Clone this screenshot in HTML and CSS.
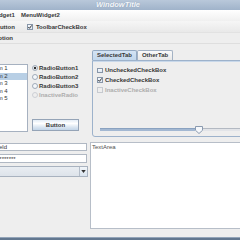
FILE: index.html
```html
<!DOCTYPE html>
<html>
<head>
<meta charset="utf-8">
<link rel="stylesheet" href="styles.css">
</head>
<body>
<div class="window">
  <div class="titlebar"><span class="title">WindowTitle</span></div>
  <div class="menubar"><span class="menu">MenuWidget1</span><span class="menu">MenuWidget2</span></div>
  <div class="toolbar">
    <span class="tbtn">ToolbarButton</span>
    <span class="check"><span class="box"><svg viewBox="0 0 6 6" width="6" height="6"><polyline points="1.3,3 2.5,4.3 4.7,1.4" fill="none" stroke="#333" stroke-width="1"/></svg></span>ToolbarCheckBox</span>
  </div>
  <div class="caption">Description</div>
  <div class="main">
    <div class="topleft">
      <ul class="list">
        <li>Item 1</li>
        <li class="sel">Item 2</li>
        <li>Item 3</li>
        <li>Item 4</li>
        <li>Item 5</li>
      </ul>
      <div class="radios">
        <div class="radio"><svg class="rdot" viewBox="0 0 6 6" width="6" height="6"><circle cx="3" cy="3" r="2.5" fill="#f4f7fb" stroke="#8b98aa" stroke-width="0.8"/><circle cx="3" cy="3" r="1.2" fill="#2a2a2a"/></svg>RadioButton1</div>
        <div class="radio"><svg class="rdot" viewBox="0 0 6 6" width="6" height="6"><circle cx="3" cy="3" r="2.5" fill="#f4f7fb" stroke="#8b98aa" stroke-width="0.8"/></svg>RadioButton2</div>
        <div class="radio"><svg class="rdot" viewBox="0 0 6 6" width="6" height="6"><circle cx="3" cy="3" r="2.5" fill="#f4f7fb" stroke="#8b98aa" stroke-width="0.8"/></svg>RadioButton3</div>
        <div class="radio off"><svg class="rdot" viewBox="0 0 6 6" width="6" height="6"><circle cx="3" cy="3" r="2.5" fill="#eeeeee" stroke="#c4c8ce" stroke-width="0.8"/></svg>InactiveRadio</div>
        <div class="btn">Button</div>
      </div>
    </div>
    <div class="tabpane">
      <div class="tabs"><span class="tab sel">SelectedTab</span><span class="tab">OtherTab</span></div>
      <div class="tabbody">
        <div class="cb"><span class="box"></span>UncheckedCheckBox</div>
        <div class="cb"><span class="box"><svg viewBox="0 0 6 6" width="6" height="6"><polyline points="1.3,3 2.5,4.3 4.7,1.4" fill="none" stroke="#333" stroke-width="1"/></svg></span>CheckedCheckBox</div>
        <div class="cb off"><span class="box"></span>InactiveCheckBox</div>
        <div class="slider">
          <div class="fill"></div>
          <svg class="thumb" viewBox="0 0 8 8" width="8" height="8"><polygon points="0.5,0.5 7.5,0.5 7.5,4.3 4,7.5 0.5,4.3" fill="#f6f8fb" stroke="#7f91a8" stroke-width="0.9"/></svg>
          <div class="rest"></div>
        </div>
      </div>
    </div>
    <div class="fields">
      <div class="field">TextField</div>
      <div class="field pw">**************</div>
      <div class="combo"><span class="ctext"></span><span class="arrow"><svg viewBox="0 0 6 4" width="5" height="3"><polygon points="0,0 6,0 3,4" fill="#333"/></svg></span></div>
    </div>
    <div class="textarea">TextArea</div>
  </div>
  <div class="gap"></div>
  <div class="bottombar"></div>
</div>
</body>
</html>
```

FILE: styles.css
```css
* { box-sizing: border-box; margin: 0; padding: 0; }
html, body { width: 240px; height: 240px; overflow: hidden; background: #eeeeee; }
body { font-family: "Liberation Sans", Arial, sans-serif; font-size: 6px; color: #383838; }

.window { margin-left: -34px; width: 304px; height: 240px; display: flex; flex-direction: column; background: #eeeeee; }

.titlebar { height: 10px; flex: none; background: linear-gradient(#b9c8da, #a0b3ca); display: flex; align-items: center; justify-content: center; }
.title { color: #f4f7fb; font-weight: bold; font-style: italic; font-size: 7.5px; line-height: 10px; text-shadow: 0 0 1px #8396ad; }

.menubar { height: 11px; flex: none; background: linear-gradient(#ffffff, #f0f0f0); display: flex; align-items: center; padding-left: 7px; font-weight: bold; }
.menu { padding: 0 3px; line-height: 11px; }

.toolbar { height: 12px; flex: none; background: linear-gradient(#f6f6f6, #e9e9e9); display: flex; align-items: center; padding-left: 8px; font-weight: bold; border-bottom: 1px solid #e2e2e2; }
.tbtn { margin-right: 12px; }
.check { display: flex; align-items: center; }
.box { width: 6px; height: 6px; border: 1px solid #8796a9; background: linear-gradient(#f7f9fc, #dfe8f2); margin-right: 3px; position: relative; flex: none; }
.box svg { position: absolute; left: -1px; top: -1px; }

.caption { height: 11px; flex: none; padding-left: 14px; line-height: 10px; font-weight: bold; border-bottom: 1px solid #dedede; }

.main { height: 185px; flex: none; padding: 6px 0 0 15px; display: grid; grid-template-columns: 107px 1fr; grid-template-rows: 87px 87px; column-gap: 2px; row-gap: 5px; }

.topleft { display: flex; padding-top: 14px; }
.list { list-style: none; margin-left: 8px; width: 39px; height: 68px; background: #fff; border: 1px solid #a6b1c0; }
.list li { line-height: 7.5px; height: 7.5px; padding-left: 1px; }
.list li.sel { background: #b8cfe5; }

.radios { margin-left: 4px; width: 48px; height: 68px; display: flex; flex-direction: column; margin-top: -0.5px; }
.radio { height: 9px; display: flex; align-items: center; font-weight: bold; white-space: nowrap; }
.rdot { margin-right: 1px; flex: none; }
.radio.off { color: #adadad; }
.btn { margin-top: auto; height: 12px; width: 47px; border: 1px solid #95a4b7; background: linear-gradient(#e4edf6 0%, #ffffff 35%, #dbe6f1 70%, #c3d5e8 100%); font-weight: bold; text-align: center; line-height: 10px; margin-bottom: 0.5px; }

.tabpane { margin-left: 2px; display: flex; flex-direction: column; }
.tabs { height: 9.5px; display: flex; flex: none; font-weight: bold; }
.tab { height: 9.5px; line-height: 9px; padding: 0 4px; border: 1px solid #a3b2c4; border-bottom: none; background: linear-gradient(#fafafa, #e8e8e8); border-radius: 2px 2px 0 0; }
.tab.sel { background: linear-gradient(#d4e4f4, #c2d7ec); border-color: #93a9c2; }
.tabbody { flex: 1; border: 1px solid #9db2cb; border-radius: 0 0 3px 3px; background: #eeeeee; padding: 5px 4px 2px 4px; display: flex; flex-direction: column; box-shadow: inset 0 1px 0 #c8d8ea; }
.cb { height: 9.8px; display: flex; align-items: center; font-weight: bold; }
.cb .box { width: 5.5px; height: 5.5px; margin-right: 2.5px; }
.cb.off { color: #adadad; }
.cb.off .box { border-color: #c6cad0; background: #eeeeee; }

.slider { margin-top: auto; height: 9px; margin-left: 3px; display: flex; align-items: center; }
.fill { width: 95px; flex: none; height: 3px; background: #a3b8d2; border-top: 1px solid #8aa2c0; }
.thumb { flex: none; display: block; }
.rest { flex: 1; height: 3px; border-top: 1px solid #b3b9c2; background: #e2e4e8; }

.fields { display: flex; flex-direction: column; padding-top: 1px; }
.field { height: 8px; width: 106px; background: #fff; border: 1px solid #b0b8c3; padding-left: 1px; line-height: 6px; margin-bottom: 3px; }
.field.pw { height: 9px; line-height: 8px; }
.combo { height: 11px; width: 107px; border: 1px solid #a8b2bf; background: linear-gradient(#e9edf2, #dde3ea); display: flex; }
.ctext { flex: 1; }
.arrow { width: 8px; border-left: 1px solid #b4bdc9; background: linear-gradient(#f2f6fa, #d9e3ee); display: flex; align-items: center; justify-content: center; }

.textarea { background: #fff; border: 1px solid #b7bec8; padding: 1px; line-height: 7px; color: #505050; }

.gap { height: 8px; flex: none; }
.bottombar { height: 3px; flex: none; background: #62778f; border-top: 1px solid #93a4b8; }
```
